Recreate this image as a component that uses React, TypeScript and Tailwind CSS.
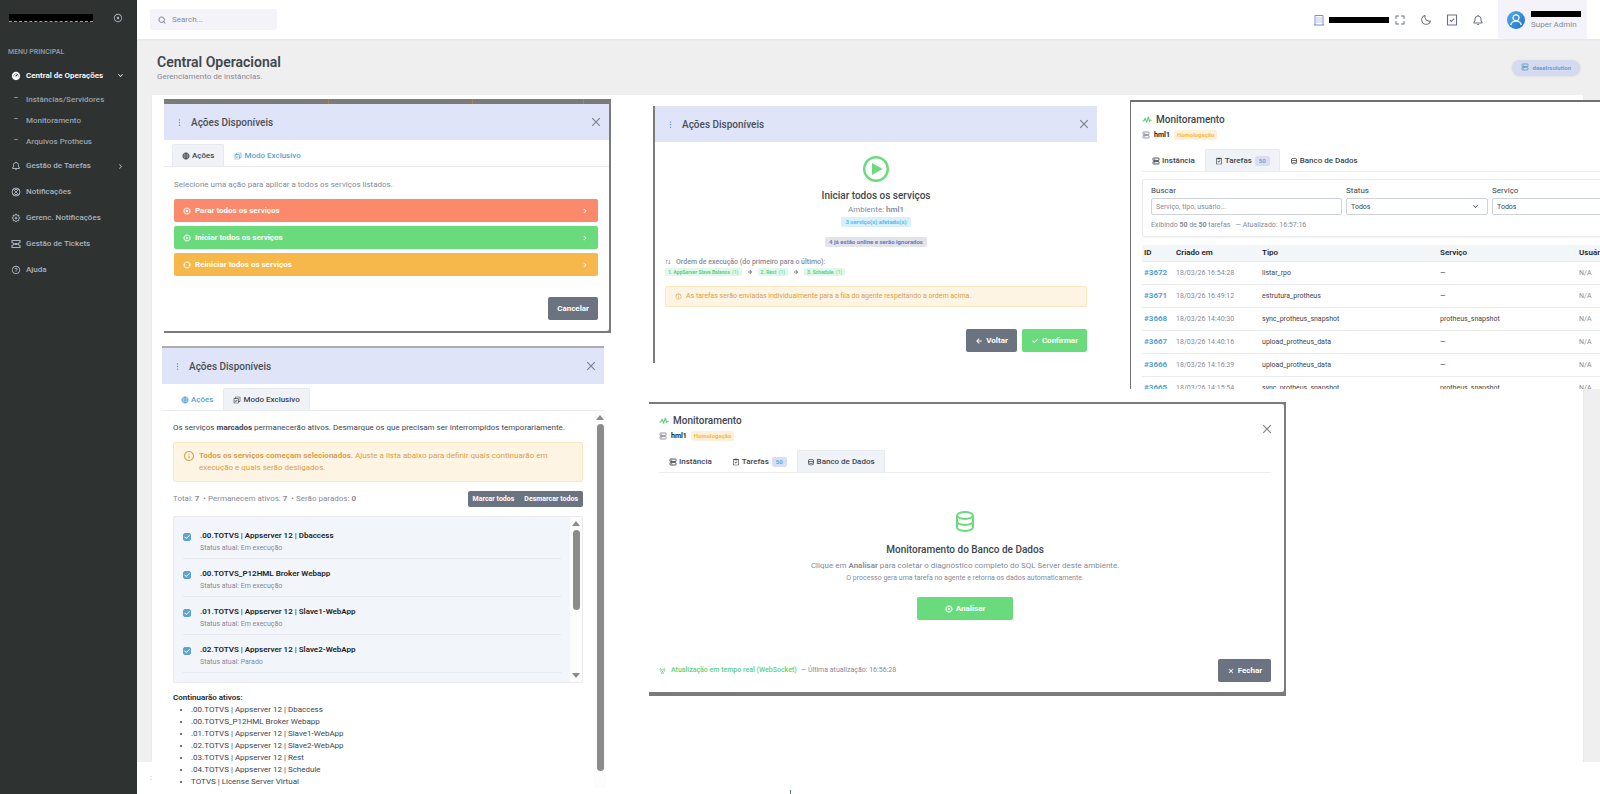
import { useState, type ReactNode } from 'react';
import { clsx } from 'clsx';
import { BiBell, BiFullscreen, BiMoon, BiTask } from 'react-icons/bi';
import {
    RiArrowDownSLine,
    RiArrowLeftLine,
    RiArrowRightLine,
    RiArrowRightSLine,
    RiArrowUpDownLine,
    RiBaseStationLine,
    RiCheckLine,
    RiCheckboxMultipleLine,
    RiCloseLine,
    RiDashboard3Fill,
    RiDatabase2Line,
    RiGlobalLine,
    RiInformationLine,
    RiMore2Fill,
    RiPlayCircleLine,
    RiQuestionLine,
    RiRecordCircleLine,
    RiRefreshLine,
    RiSearchLine,
    RiSettings5Line,
    RiStopCircleLine,
} from 'react-icons/ri';

const services = [
    '.00.TOTVS | Appserver 12 | Dbaccess',
    '.00.TOTVS_P12HML Broker Webapp',
    '.01.TOTVS | Appserver 12 | Slave1-WebApp',
    '.02.TOTVS | Appserver 12 | Slave2-WebApp',
    '.03.TOTVS | Appserver 12 | Rest',
    '.04.TOTVS | Appserver 12 | Schedule',
    'TOTVS | License Server Virtual',
];

const tasks = [
    { id: '#3672', date: '18/03/26 16:54:28', type: 'listar_rpo', service: '—' },
    { id: '#3671', date: '18/03/26 16:49:12', type: 'estrutura_protheus', service: '—' },
    { id: '#3668', date: '18/03/26 14:40:30', type: 'sync_protheus_snapshot', service: 'protheus_snapshot' },
    { id: '#3667', date: '18/03/26 14:40:16', type: 'upload_protheus_data', service: '—' },
    { id: '#3666', date: '18/03/26 14:16:39', type: 'upload_protheus_data', service: '—' },
    { id: '#3665', date: '18/03/26 14:15:54', type: 'sync_protheus_snapshot', service: 'protheus_snapshot' },
];

const actions = [
    { label: 'Parar todos os serviços', icon: <RiStopCircleLine strokeWidth={1} />, color: 'bg-[#fb896b]' },
    { label: 'Iniciar todos os serviços', icon: <RiPlayCircleLine strokeWidth={1} />, color: 'bg-[#6adb7d]' },
    { label: 'Reiniciar todos os serviços', icon: <RiRefreshLine strokeWidth={1} />, color: 'bg-[#f7b84b]' },
];

const btnClass = 'flex h-[23px] items-center justify-center gap-[3px] rounded-xs px-[9px] text-[8px] font-bold text-white';

function BuildingIcon() {
    return (
        <svg viewBox="0 0 12 12" className="size-3" fill="none" stroke="currentColor">
            <path d="M2 11V1.500h8V11M.8 11h10.400" />
            <path d="M4 3.500v5M6 3.500v5M8 3.500v5" strokeDasharray="1 1" />
        </svg>
    );
}

function TaskBoxIcon() {
    return (
        <svg viewBox="0 0 12 12" className="size-3" fill="none" stroke="currentColor" strokeWidth="1.100">
            <path d="M1.500 1h9v10h-9zM4 6l1.500 1.500L8.200 4.600" />
        </svg>
    );
}

function NoticeIcon() {
    return (
        <svg viewBox="0 0 10 10" className="size-[10px]" fill="none" stroke="currentColor">
            <circle cx="5" cy="5" r="4" />
            <path d="M2 2l6 6M8 2L2 8M3 1.500C3.800 3 6.200 3 7 1.500M3 8.500C3.800 7 6.200 7 7 8.500" strokeWidth=".9" />
        </svg>
    );
}

function TicketIcon() {
    return (
        <svg viewBox="0 0 10 10" className="size-[10px]" fill="none" stroke="currentColor" strokeWidth="1.100">
            <path d="M1 1.500h8v2a1.500 1.500 0 0 0 0 3v2H1v-2a1.500 1.500 0 0 0 0-3z" />
            <path d="M3.300 5h3.400" strokeWidth="2" />
        </svg>
    );
}

function ServerIcon() {
    return (
        <svg viewBox="0 0 8 8" className="size-2" fill="none" stroke="currentColor" strokeWidth=".9">
            <rect x="1" y="1" width="6" height="2.600" rx=".6" />
            <rect x="1" y="4.400" width="6" height="2.600" rx=".6" />
            <path d="M2.200 2.300h1M2.200 5.700h1" />
        </svg>
    );
}

function PulseIcon() {
    return (
        <svg viewBox="0 0 10 8" className="h-2 w-[10px]" fill="none" stroke="#5fd07a" strokeWidth="1.100" strokeLinejoin="round">
            <path d="M.3 5h1.500l1.400-2.800 1.400 4L6.400 1l1.200 4.500.7-1.300h1.400" />
        </svg>
    );
}

function CloseIcon() {
    return (
        <svg viewBox="0 0 10 10" className="size-[10px]" stroke="#7f848b" strokeWidth="1.200" fill="none">
            <path d="M1.200 1.200l7.600 7.600M8.800 1.200L1.200 8.800" />
        </svg>
    );
}

function NavItem({ icon, label, children }: { icon: ReactNode; label: string; children?: ReactNode }) {
    return (
        <a href="#" className="flex h-[26px] items-center pl-[11px] pr-3 text-[#abb2bd]">
            <span className="w-[15px] text-[10px]">{icon}</span>
            <span className="grow">{label}</span>
            {children}
        </a>
    );
}

function Sidebar() {
    return (
        <aside className="w-[137px] shrink-0 bg-[#2e3231] text-[8px] font-medium">
            <div className="flex h-9 items-center justify-between pl-[9px] pr-[14px]">
                <div className="h-2 w-[84px] border-b border-dashed border-gray-400 bg-black" />
                <button aria-label="Recolher menu" className="text-[10px] text-[#abb2bd]"><RiRecordCircleLine /></button>
            </div>
            <p className="mt-2 h-4 pl-2 text-[7px] leading-4 font-semibold text-[#8d949e]">MENU PRINCIPAL</p>
            <nav>
                <a href="#" className="mt-[3px] flex h-[25px] items-center pl-[11px] pr-3 font-semibold text-white">
                    <RiDashboard3Fill className="mr-[5px] text-[10px]" />
                    <span className="grow">Central de Operações</span>
                    <RiArrowDownSLine className="text-[9px]" />
                </a>
                <ul className="pt-px text-[#9aa1ab]">
                    {['Instâncias/Servidores', 'Monitoramento', 'Arquivos Protheus'].map((item) => (
                        <li key={item}>
                            <a href="#" className="flex h-[21px] items-center pl-[14px]">
                                <span className="mr-2 mb-1 h-px w-1 bg-[#7d848e]" />
                                {item}
                            </a>
                        </li>
                    ))}
                </ul>
                <div className="pt-px">
                    <NavItem icon={<BiBell />} label="Gestão de Tarefas"><RiArrowRightSLine className="text-[9px]" /></NavItem>
                    <NavItem icon={<NoticeIcon />} label="Notificações" />
                    <NavItem icon={<RiSettings5Line />} label="Gerenc. Notificações" />
                    <NavItem icon={<TicketIcon />} label="Gestão de Tickets" />
                    <NavItem icon={<RiQuestionLine />} label="Ajuda" />
                </div>
            </nav>
        </aside>
    );
}

function Topbar() {
    return (
        <header className="flex h-[39px] shrink-0 items-center justify-between bg-white pl-[13px] pr-[13px] shadow-xs">
            <label className="flex h-[21px] w-[127px] items-center gap-1.5 rounded-xs bg-[#f3f3f9] px-2 text-[#878a99]">
                <RiSearchLine className="shrink-0 text-[8px]" strokeWidth={1} />
                <input type="text" aria-label="Search" placeholder="Search..." className="w-full bg-transparent text-[8px] outline-none placeholder:text-[#878a99]" />
            </label>
            <div className="flex h-full items-center text-xs text-[#6c7084]">
                <span className="mr-1 text-[#7b8bd4]"><BuildingIcon /></span>
                <div className="mr-[5px] h-[6px] w-[60px] bg-black" />
                <div className="mr-[14px] flex gap-[14px]">
                    <button aria-label="Tela cheia"><BiFullscreen /></button>
                    <button aria-label="Modo escuro"><BiMoon /></button>
                    <button aria-label="Tarefas"><TaskBoxIcon /></button>
                    <button aria-label="Alertas"><BiBell /></button>
                </div>
                <div className="flex h-full w-[89px] items-center gap-[6px] bg-[#f3f3f9] pl-[9px]">
                    <svg viewBox="0 0 18 18" className="size-[18px]">
                        <defs>
                            <linearGradient id="avatar" x1="0" y1="0" x2="1" y2="1">
                                <stop offset="0" stopColor="#4fb0f0" />
                                <stop offset="1" stopColor="#1f6fc9" />
                            </linearGradient>
                        </defs>
                        <circle cx="9" cy="9" r="9" fill="url(#avatar)" />
                        <g fill="none" stroke="#fff" strokeWidth="1.200">
                            <circle cx="9" cy="6.800" r="3" />
                            <path d="M3.800 14.200c.4-3 2.300-4 5.200-4s4.800 1 5.200 4" />
                        </g>
                    </svg>
                    <div>
                        <div className="mt-[2px] h-[6px] w-[50px] bg-black" />
                        <p className="mt-[3px] text-[8px] leading-[10px] whitespace-nowrap text-[#878a99]">Super Admin</p>
                    </div>
                </div>
            </div>
        </header>
    );
}

function ModalHeader() {
    return (
        <div className="flex h-9 items-center bg-[#e0e4f8] pl-[11px] pr-2 text-[#495057]">
            <RiMore2Fill className="mr-[7px] text-[9px] text-[#4f9fcf]" />
            <h2 className="grow text-[10px] font-medium">Ações Disponíveis</h2>
            <button aria-label="Fechar"><CloseIcon /></button>
        </div>
    );
}

function Tab({ icon, label, active, blue, count }: { icon: ReactNode; label: string; active?: boolean; blue?: boolean; count?: number }) {
    return (
        <button
            className={clsx(
                'flex h-[22px] items-center gap-[2px] rounded-t-xs border border-b-0 px-[9px] text-[8px] font-medium whitespace-nowrap',
                active ? 'border-[#e6eaf0] bg-[#eff2f7]' : 'border-transparent',
                blue ? 'text-[#5aa5cf]' : 'text-[#40464d]',
            )}
        >
            {icon}
            {label}
            {count && <span className="ml-px rounded-xs bg-[#d9def5] px-1 text-[6px] leading-[10px] text-[#4f9fcf]">{count}</span>}
        </button>
    );
}

function ActionsPanel() {
    return (
        <section className="ml-[2px] border-r-2 border-b-2 border-[#7b7b7b] bg-[#7b7b7b]">
            <div className="flex h-[5px]">
                <div className="ml-[164px] w-px bg-[#a38650]" />
                <div className="ml-[143px] w-px bg-[#a38650]" />
                <div className="ml-[110px] w-px bg-[#a38650]" />
            </div>
            <div className="rounded-r-xs bg-white">
                <ModalHeader />
                <div className="flex border-b border-[#e9ebec] pt-1 pl-2">
                    <Tab icon={<RiGlobalLine strokeWidth={1} />} label="Ações" active />
                    <Tab icon={<RiCheckboxMultipleLine />} label="Modo Exclusivo" blue />
                </div>
                <div className="pt-3 pr-[11px] pb-[11px] pl-[10px]">
                    <p className="text-[8px] leading-3 text-[#878a99]">Selecione uma ação para aplicar a todos os serviços listados.</p>
                    <div className="mt-2 flex flex-col gap-1">
                        {actions.map((action) => (
                            <button key={action.label} className={clsx('flex h-[23px] items-center gap-1 rounded-xs px-[9px] text-[8px] font-bold text-white', action.color)}>
                                {action.icon}
                                <span className="grow text-left">{action.label}</span>
                                <RiArrowRightSLine strokeWidth={1} />
                            </button>
                        ))}
                    </div>
                    <div className="mt-[21px] flex justify-end">
                        <button className={clsx(btnClass, 'bg-[#6b7280]')}>Cancelar</button>
                    </div>
                </div>
            </div>
        </section>
    );
}

function ScrollBar({ thumb, arrowDown }: { thumb: string; arrowDown?: boolean }) {
    return (
        <div className="flex w-3 shrink-0 flex-col items-center bg-[#fcfcfc] pt-1">
            <svg viewBox="0 0 8 5" className="h-[5px] w-2 shrink-0" fill="#8b8b8b"><path d="M4 0l4 5H0z" /></svg>
            <div className={clsx('mt-1 w-[7px] rounded-full bg-[#8b8b8b]', thumb)} />
            {arrowDown && <svg viewBox="0 0 8 5" className="mt-auto mb-1 h-[5px] w-2 shrink-0" fill="#8b8b8b"><path d="M4 5l4-5H0z" /></svg>}
        </div>
    );
}

function ExclusivePanel() {
    const [stopped, setStopped] = useState<string[]>([]);

    const toggle = (name: string) => {
        setStopped(stopped.includes(name) ? stopped.filter((s) => s !== name) : [...stopped, name]);
    };

    const activeServices = services.filter((s) => !stopped.includes(s));

    return (
        <section className="relative mt-[13px] mr-[7px] border-t-2 border-[#adadb0] bg-white">
            <ModalHeader />
            <div className="flex border-b border-[#e9ebec] pt-1 pl-[9px]">
                <Tab icon={<RiGlobalLine strokeWidth={1} />} label="Ações" blue />
                <Tab icon={<RiCheckboxMultipleLine />} label="Modo Exclusivo" active />
            </div>
            <div className="flex">
                <div className="grow pl-[11px] pr-[11px] pt-[11px] text-[8px] text-[#878a99]">
                    <p className="leading-3 text-[#40464d]">
                        Os serviços <b>marcados</b> permanecerão ativos. Desmarque os que precisam ser interrompidos temporariamente.
                    </p>
                    <div className="mt-2 flex h-10 items-center gap-1 rounded-xs border border-[#fde5bc] bg-[#fef4e4] px-[9px] leading-3 text-[#d9a04a]">
                        <RiInformationLine className="mb-3 shrink-0 text-xs" />
                        <p>
                            <b>Todos os serviços começam selecionados.</b> Ajuste a lista abaixo para definir quais continuarão em
                            <br />
                            execução e quais serão desligados.
                        </p>
                    </div>
                    <div className="mt-[9px] flex items-center justify-between">
                        <p>
                            Total: <b>{services.length}</b> &nbsp;• Permanecem ativos: <b>{activeServices.length}</b> &nbsp;• Serão parados: <b>{stopped.length}</b>
                        </p>
                        <div className="flex h-4 overflow-hidden rounded-xs bg-[#6b7280] text-[7px] font-bold text-white">
                            <button onClick={() => setStopped([])} className="px-[5px]">Marcar todos</button>
                            <button onClick={() => setStopped(services)} className="px-[5px]">Desmarcar todos</button>
                        </div>
                    </div>
                    <div className="mt-[9px] flex h-[167px] overflow-hidden rounded-xs border border-[#e9ebec] bg-[#f2f5f9]">
                        <ul className="grow px-[9px] pt-1">
                            {services.slice(0, 4).map((name, i) => (
                                <li key={name} className="border-b border-[#e6eaee] pt-[9px] pb-1">
                                    <label className="flex gap-[9px]">
                                        <span className="relative mt-[3px] size-2">
                                            <input
                                                type="checkbox"
                                                checked={!stopped.includes(name)}
                                                onChange={() => toggle(name)}
                                                className="block size-2 appearance-none rounded-xs border border-[#5aa5cf] bg-white checked:bg-[#5aa5cf]"
                                            />
                                            <RiCheckLine className="pointer-events-none absolute inset-0 size-2 text-white" />
                                        </span>
                                        <span>
                                            <span className="block leading-3 font-semibold text-[#212529]">{name}</span>
                                            <span className="block text-[7px] leading-3">Status atual: {i === 3 ? 'Parado' : 'Em execução'}</span>
                                        </span>
                                    </label>
                                </li>
                            ))}
                        </ul>
                        <ScrollBar thumb="h-20" arrowDown />
                    </div>
                    <p className="mt-[9px] leading-3 font-semibold text-[#212529]">Continuarão ativos:</p>
                    <ul className="list-disc pl-[18px] leading-3 text-[#40464d]">
                        {activeServices.map((name) => <li key={name}>{name}</li>)}
                    </ul>
                </div>
                <div className="-mr-[2px] flex"><ScrollBar thumb="h-[347px]" /></div>
            </div>
        </section>
    );
}

function ConfirmPanel() {
    const steps = ['1. AppServer Slave Balance', '2. Rest', '3. Schedule'];

    return (
        <section className="mt-[7px] ml-1 flex-[444] self-start border-l-2 border-[#7b7b7b] bg-white">
            <ModalHeader />
            <div className="px-[10px] pt-[14px] pb-[11px] text-[7px] text-[#878a99]">
                <div className="flex flex-col items-center">
                    <svg viewBox="0 0 26 26" className="size-[26px]">
                        <circle cx="13" cy="13" r="11.800" fill="none" stroke="#6adb7d" strokeWidth="2.400" />
                        <path d="M9 7l10.500 6L9 19z" fill="#6adb7d" />
                    </svg>
                    <h3 className="mt-2 text-[10px] leading-3 font-medium text-[#40464d]">Iniciar todos os serviços</h3>
                    <p className="mt-[2px] text-[8px] leading-3">Ambiente: <b className="font-semibold">hml1</b></p>
                    <span className="mt-px rounded-xs bg-[#d9effb] px-1 text-[6px] leading-[10px] font-bold text-[#4fc1ea]">3 serviço(s) afetado(s)</span>
                    <span className="mt-[10px] rounded-xs bg-[#e2e4ea] px-1 text-[6px] leading-[10px] font-bold text-[#6878c4]">4 já estão online e serão ignorados</span>
                </div>
                <p className="mt-[9px] flex items-center gap-[5px] leading-3 font-medium"><RiArrowUpDownLine className="text-[6px]" />Ordem de execução (do primeiro para o último):</p>
                <div className="flex items-center gap-[5px] text-[5px] leading-[8px] text-[#5fd07a]">
                    {steps.map((step, i) => (
                        <span key={step} className="flex items-center gap-[5px]">
                            {i > 0 && <RiArrowRightLine className="text-[6px] text-[#6c7084]" strokeWidth={1} />}
                            <span className="rounded-xs bg-[#e0f8ee] px-[3px]"><b>{step}</b> &nbsp;(1)</span>
                        </span>
                    ))}
                </div>
                <p className="mt-[10px] flex h-[21px] items-center gap-1 rounded-xs border border-[#fde5bc] bg-[#fef4e4] px-[9px] text-[#d9a04a]">
                    <RiInformationLine />As tarefas serão enviadas individualmente para a fila do agente respeitando a ordem acima.
                </p>
                <div className="mt-[22px] flex justify-end gap-[5px]">
                    <button className={clsx(btnClass, 'bg-[#6b7280]')}><RiArrowLeftLine strokeWidth={1} />Voltar</button>
                    <button className={clsx(btnClass, 'bg-[#6adb7d]')}><RiCheckLine strokeWidth={1} />Confirmar</button>
                </div>
            </div>
        </section>
    );
}

function MonitorHeader({ tab }: { tab: 'tarefas' | 'banco' }) {
    return (
        <>
            <h2 className="flex items-center gap-1 text-[10px] leading-3 font-medium text-[#40464d]"><PulseIcon />Monitoramento</h2>
            <div className="mt-[3px] flex items-center gap-1 text-[7px] leading-3 font-bold text-[#212529]">
                <span className="text-[#878a99]"><ServerIcon /></span>hml1
                <span className="rounded-xs bg-[#fef0d9] px-[3px] text-[6px] leading-[10px] text-[#f7b84b]">Homologação</span>
            </div>
            <div className="mt-2 flex border-b border-[#ededee]">
                <Tab icon={<ServerIcon />} label="Instância" />
                <Tab icon={<BiTask />} label="Tarefas" active={tab === 'tarefas'} count={50} />
                <Tab icon={<RiDatabase2Line />} label="Banco de Dados" active={tab === 'banco'} />
            </div>
        </>
    );
}

function FilterSelect({ label }: { label: string }) {
    return (
        <label className="w-[142px] shrink-0">
            {label}
            <span className="relative mt-px block">
                <select className="block h-[17px] w-full appearance-none rounded-xs border border-[#ced4da] bg-white px-1 text-[7px]">
                    <option>Todos</option>
                </select>
                <RiArrowDownSLine className="pointer-events-none absolute top-1 right-2 text-[9px]" />
            </span>
        </label>
    );
}

function TasksPanel() {
    return (
        <section className="mt-px h-[289px] flex-[471] overflow-hidden border-t-2 border-l border-[#6f7072] bg-white">
            <div className="min-w-[640px] pt-3 pl-[11px]">
                <MonitorHeader tab="tarefas" />
                <div className="mt-[7px] rounded-xs border border-[#e9ebec] px-2 pt-[5px] leading-3 text-[#40464d] shadow-xs">
                    <div className="flex gap-1 text-[8px]">
                        <label className="w-[191px] shrink-0">
                            Buscar
                            <input type="text" placeholder="Serviço, tipo, usuário..." className="mt-px block h-[17px] w-full rounded-xs border border-[#ced4da] px-1 text-[7px] placeholder:text-[#878a99]" />
                        </label>
                        <FilterSelect label="Status" />
                        <FilterSelect label="Serviço" />
                    </div>
                    <p className="mt-1 mb-[5px] text-[7px] leading-3 text-[#878a99]">Exibindo <b>50</b> de <b>50</b> tarefas &nbsp; — Atualizado: 16:57:16</p>
                </div>
                <table className="mt-2 w-full table-fixed border-collapse text-left text-[7px] leading-3 text-[#40464d]">
                    <thead>
                        <tr className="h-4 border-b border-[#e9ebec] bg-[#f3f6f9] text-[8px] text-[#212529]">
                            <th className="w-[34px] pl-[2px] font-semibold">ID</th>
                            <th className="w-[86px] font-semibold">Criado em</th>
                            <th className="w-[178px] font-semibold">Tipo</th>
                            <th className="w-[139px] font-semibold">Serviço</th>
                            <th className="font-semibold">Usuário</th>
                        </tr>
                    </thead>
                    <tbody>
                        {tasks.map((task) => (
                            <tr key={task.id} className="h-[23px] border-b border-[#e9ebec]">
                                <td className="pl-[2px] text-[8px] font-bold text-[#4f9fcf]">{task.id}</td>
                                <td className="text-[#878a99]">{task.date}</td>
                                <td>{task.type}</td>
                                <td>{task.service}</td>
                                <td className="text-[#878a99]">N/A</td>
                            </tr>
                        ))}
                    </tbody>
                </table>
            </div>
        </section>
    );
}

function DatabasePanel() {
    return (
        <section className="mt-[13px] w-[67%] border-t-2 border-r-2 border-b-4 border-[#7b7b7b] bg-[#7b7b7b]">
            <div className="relative rounded-r-xs bg-white pt-[11px] pr-[13px] pb-[10px] pl-[10px]">
                <MonitorHeader tab="banco" />
                <button aria-label="Fechar" className="absolute top-5 right-3"><CloseIcon /></button>
                <div className="flex flex-col items-center pt-[38px] text-[#878a99]">
                    <svg viewBox="0 0 18 21" className="h-[21px] w-[18px]" fill="none" stroke="#6adb7d" strokeWidth="2">
                        <ellipse cx="9" cy="4.500" rx="8" ry="3.400" />
                        <path d="M1 4.500v12c0 1.900 3.600 3.400 8 3.400s8-1.500 8-3.400v-12M1 10.500c0 1.900 3.600 3.400 8 3.400s8-1.500 8-3.400" />
                    </svg>
                    <h3 className="mt-3 text-[10px] leading-3 font-medium text-[#40464d]">Monitoramento do Banco de Dados</h3>
                    <p className="mt-1 text-[8px] leading-3">Clique em <b className="font-semibold">Analisar</b> para coletar o diagnóstico completo do SQL Server deste ambiente.</p>
                    <p className="text-[7px] leading-3">O processo gera uma tarefa no agente e retorna os dados automaticamente.</p>
                    <button className={clsx(btnClass, 'mt-[13px] w-24 bg-[#6adb7d]')}><RiPlayCircleLine strokeWidth={1} />Analisar</button>
                </div>
                <div className="mt-[39px] flex items-center text-[7px] text-[#878a99]">
                    <RiBaseStationLine className="mr-[5px] text-[#5fd07a]" />
                    <span className="mr-1 font-medium text-[#5fd07a]">Atualização em tempo real (WebSocket)</span>
                    <span className="grow">— Última atualização: 16:56:28</span>
                    <button className={clsx(btnClass, 'bg-[#6b7280]')}><RiCloseLine strokeWidth={1} />Fechar</button>
                </div>
            </div>
        </section>
    );
}

export default function App() {
    return (
        <div className="flex h-screen overflow-hidden bg-[#efefef] font-[Roboto,sans-serif]">
            <Sidebar />
            <main className="flex min-w-0 grow flex-col">
                <Topbar />
                <div className="flex h-14 shrink-0 items-center justify-between pl-5 pr-5">
                    <div className="pt-[3px]">
                        <h1 className="text-[14px] leading-4 font-semibold text-[#40464d]">Central Operacional</h1>
                        <p className="mt-px text-[8px] leading-3 text-[#878a99]">Gerenciamento de instâncias.</p>
                    </div>
                    <span className="flex h-[15px] items-center gap-1 rounded-full bg-[#d5daf0] px-[9px] text-[6px] font-semibold text-[#5b9fd0] shadow-sm">
                        <ServerIcon />deaelrsolution
                    </span>
                </div>
                <div className="mr-[17px] ml-[15px] min-h-0 grow bg-white shadow-xs">
                    <div className="-mr-[17px] flex gap-[38px] pt-1 pl-[10px]">
                        <div className="min-w-0 flex-[449]">
                            <ActionsPanel />
                            <ExclusivePanel />
                        </div>
                        <div className="min-w-0 flex-[951]">
                            <div className="flex gap-[33px]">
                                <ConfirmPanel />
                                <TasksPanel />
                            </div>
                            <DatabasePanel />
                        </div>
                    </div>
                </div>
                <footer className="flex h-8 shrink-0 items-center bg-white pl-[13px] text-[7px] text-[#878a99]">
                    :
                    <span className="ml-[44%] h-1 w-px self-end bg-[#6b7280]" />
                </footer>
            </main>
        </div>
    );
}
